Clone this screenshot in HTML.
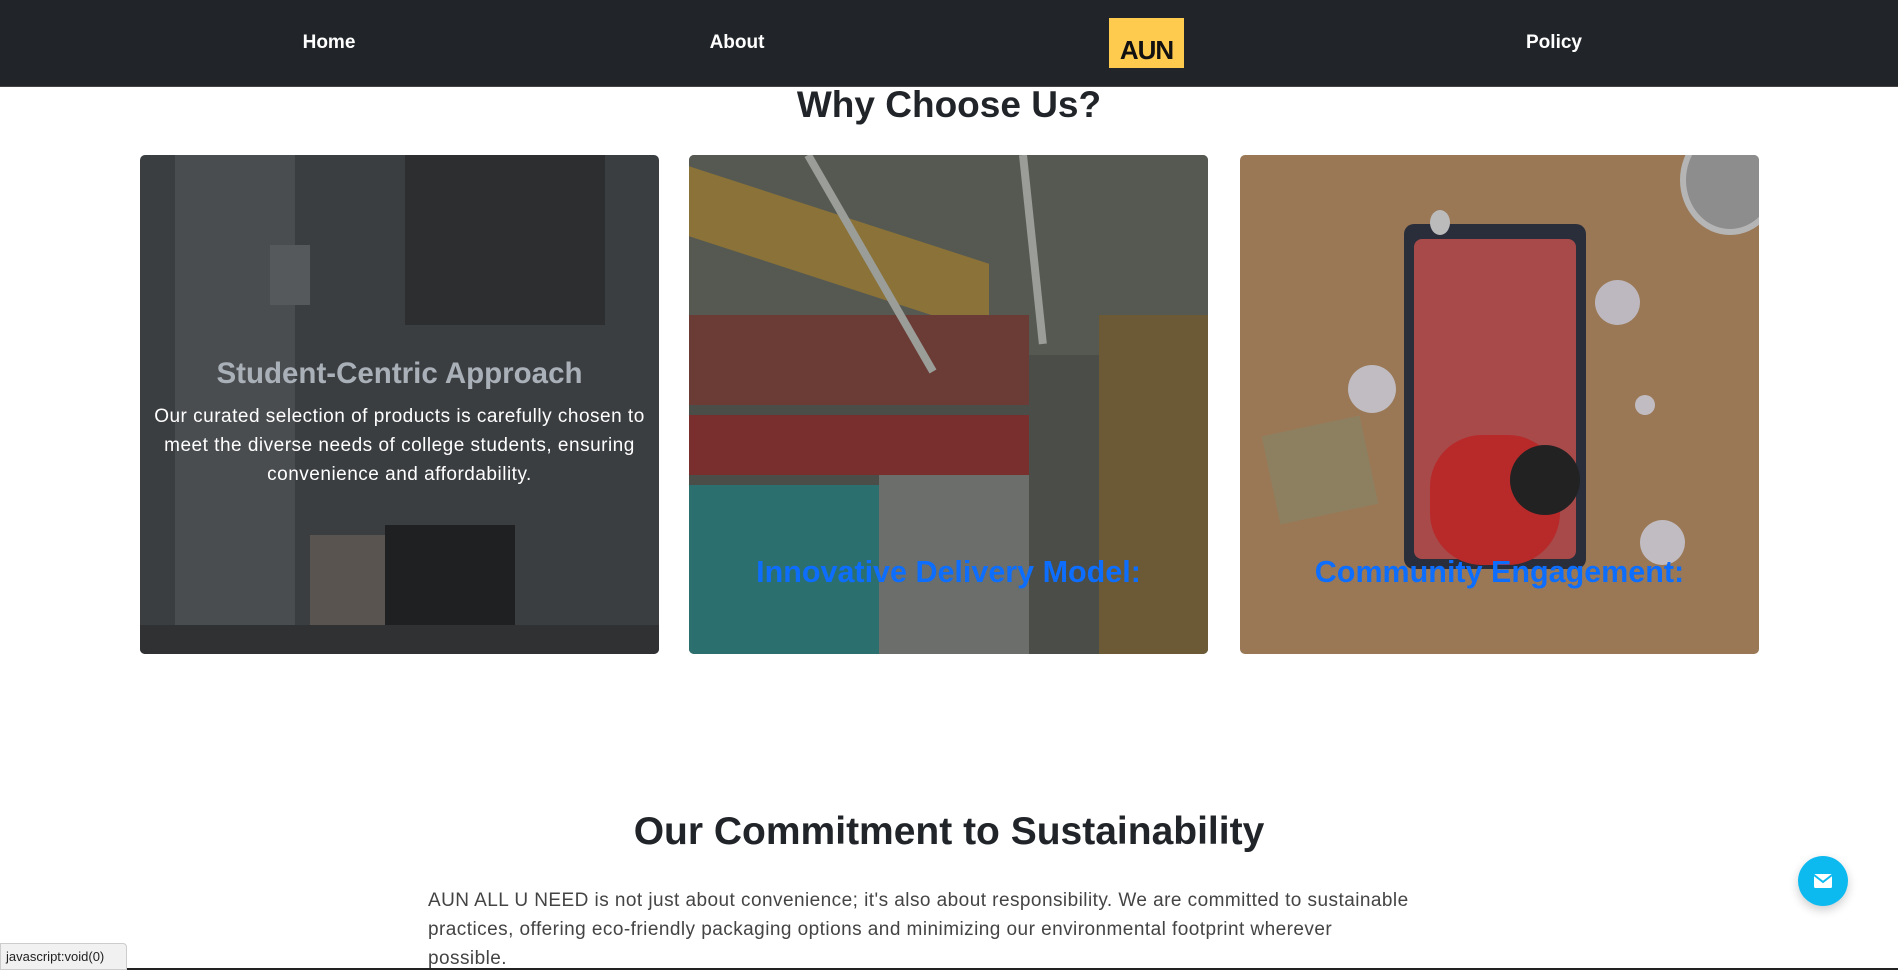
<!DOCTYPE html>
<html><head><meta charset="utf-8"><style>
*{margin:0;padding:0;box-sizing:border-box}
html,body{width:1898px;height:970px;overflow:hidden;background:#fff;font-family:"Liberation Sans",sans-serif;color:#212529}
nav{position:absolute;left:0;top:0;width:1898px;height:87px;background:#212529;border-bottom:1px solid #444}
nav a{position:absolute;top:32px;color:#fff;font-weight:bold;font-size:19px;text-decoration:none;transform:translateX(-50%)}
.logo{position:absolute;left:1109px;top:18px;width:75px;height:50px;background:#ffcb4f;font-weight:bold;font-size:26px;color:#111;text-align:center;line-height:64px;letter-spacing:-1px}
h2{position:absolute;width:1898px;text-align:center;font-weight:bold;color:#212529}
.card{position:absolute;top:155px;width:519px;height:499px;border-radius:5px;overflow:hidden}
.ct{position:absolute;left:0;width:100%;text-align:center;font-weight:bold;font-size:29.5px}
p.body{position:absolute;left:428px;top:886px;width:1100px;font-size:19px;line-height:29px;color:#444;letter-spacing:0.45px;white-space:nowrap}
</style></head><body>
<nav>
<a style="left:329px">Home</a>
<a style="left:737px">About</a>
<div class="logo">AUN</div>
<a style="left:1554px">Policy</a>
</nav>
<h2 style="top:84px;font-size:37px">Why Choose Us?</h2>

<div class="card" style="left:140px;background:#3b3e41">
 <div style="position:absolute;left:35px;top:0;width:120px;height:499px;background:#4a4d50"></div>
 <div style="position:absolute;left:265px;top:0;width:200px;height:170px;background:#2c2e30"></div>
 <div style="position:absolute;left:130px;top:90px;width:40px;height:60px;background:#55595c"></div>
 <div style="position:absolute;left:170px;top:380px;width:80px;height:100px;background:#5a5450"></div>
 <div style="position:absolute;left:245px;top:370px;width:130px;height:115px;background:#1e2022"></div>
 <div style="position:absolute;left:0;top:470px;width:519px;height:29px;background:#2f3133"></div>
 <div class="ct" style="top:202px;color:#a9b0b8">Student-Centric Approach</div>
 <div style="position:absolute;left:0;top:247px;width:100%;text-align:center;color:#fff;font-size:19px;line-height:29px;letter-spacing:0.5px">Our curated selection of products is carefully chosen to meet the diverse needs of college students, ensuring convenience and affordability.</div>
</div>

<div class="card" style="left:689px;background:#4a4d48">
 <div style="position:absolute;left:0;top:0;width:519px;height:200px;background:#555951"></div>
 <div style="position:absolute;left:0;top:60px;width:300px;height:70px;background:#8a7239;transform:skewY(18deg)"></div>
 <div style="position:absolute;left:0;top:160px;width:340px;height:90px;background:#6b3b36"></div>
 <div style="position:absolute;left:0;top:260px;width:340px;height:60px;background:#7a2f2f"></div>
 <div style="position:absolute;left:0;top:330px;width:280px;height:169px;background:#2c6f6f"></div>
 <div style="position:absolute;left:190px;top:320px;width:150px;height:179px;background:#6b6e6a"></div>
 <div style="position:absolute;left:410px;top:160px;width:109px;height:339px;background:#6b5a35"></div>
 <div style="position:absolute;left:115px;top:0;width:8px;height:250px;background:#9a9d98;transform:rotate(-30deg);transform-origin:top"></div>
 <div style="position:absolute;left:330px;top:0;width:8px;height:190px;background:#9a9d98;transform:rotate(-6deg);transform-origin:top"></div>
 <div class="ct" style="top:400px;color:#0d6efd;font-size:30.5px">Innovative Delivery Model:</div>
</div>

<div class="card" style="left:1240px;background:#9a7856">
 <div style="position:absolute;left:440px;top:-30px;width:100px;height:110px;border-radius:50%;background:#8d8d8d;border:6px solid #b5b5b5"></div>
 <div style="position:absolute;left:164px;top:69px;width:182px;height:345px;border-radius:10px;background:#2a2e3a"></div>
 <div style="position:absolute;left:174px;top:84px;width:162px;height:320px;border-radius:8px;background:#a8494a"></div>
 <div style="position:absolute;left:190px;top:280px;width:130px;height:130px;border-radius:40%;background:#b82a2a"></div>
 <div style="position:absolute;left:270px;top:290px;width:70px;height:70px;border-radius:50%;background:#222"></div>
 <div style="position:absolute;left:30px;top:270px;width:100px;height:90px;background:#8d8060;transform:rotate(-12deg)"></div>
 <div style="position:absolute;left:190px;top:55px;width:20px;height:25px;border-radius:50%;background:#bbb"></div>
 <div style="position:absolute;left:355px;top:125px;width:45px;height:45px;border-radius:50%;background:#bdb8bf"></div>
 <div style="position:absolute;left:108px;top:210px;width:48px;height:48px;border-radius:50%;background:#c0bcc2"></div>
 <div style="position:absolute;left:395px;top:240px;width:20px;height:20px;border-radius:50%;background:#c0bcc2"></div>
 <div style="position:absolute;left:400px;top:365px;width:45px;height:45px;border-radius:50%;background:#c0bcc2"></div>
 <div class="ct" style="top:400px;color:#0d6efd;font-size:30.5px">Community Engagement:</div>
</div>

<h2 style="top:810px;font-size:39px">Our Commitment to Sustainability</h2>
<p class="body">AUN ALL U NEED is not just about convenience; it's also about responsibility. We are committed to sustainable<br>practices, offering eco-friendly packaging options and minimizing our environmental footprint wherever<br>possible.</p>

<div style="position:absolute;left:1798px;top:856px;width:50px;height:50px;border-radius:50%;background:#0dbaf0;box-shadow:0 4px 10px rgba(0,0,0,.2)">
 <svg width="50" height="50" viewBox="0 0 50 50"><rect x="16" y="18" width="18" height="14" rx="1.5" fill="#fff"/><path d="M16 19 L25 26 L34 19" stroke="#0dbaf0" stroke-width="2" fill="none"/></svg>
</div>
<div style="position:absolute;left:0;top:943px;width:127px;height:27px;background:#f1f1f1;border:1px solid #ccc;border-radius:0 4px 0 0;font-size:13px;line-height:25px;padding-left:5px;color:#222">javascript:void(0)</div>
<div style="position:absolute;left:127px;top:968px;width:1771px;height:2px;background:#222"></div>
</body></html>
